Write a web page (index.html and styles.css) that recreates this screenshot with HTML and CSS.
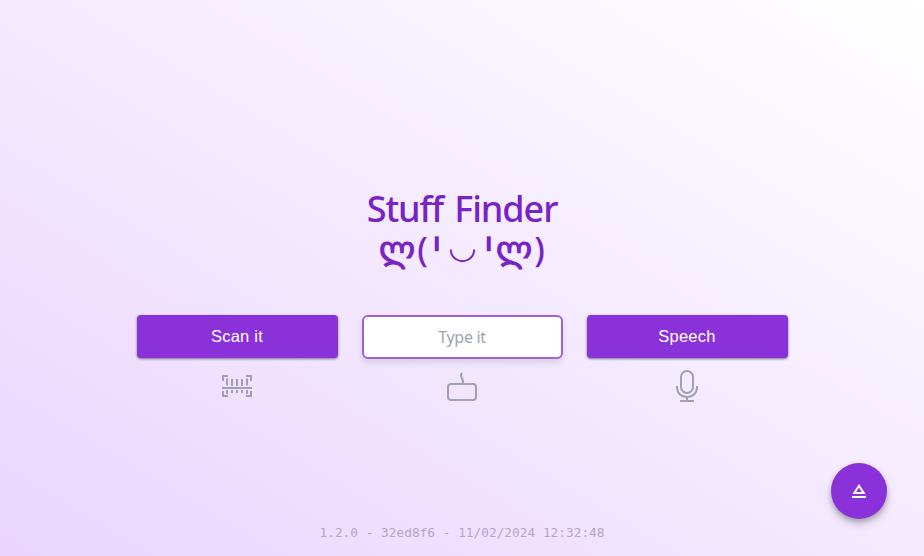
FILE: index.html
```html
<!DOCTYPE html>
<html lang="en">
<head>
<meta charset="utf-8">
<title>Stuff Finder</title>
<link rel="stylesheet" href="styles.css">
</head>
<body>
<main class="page">
  <h1 class="title">
    <span class="name">Stuff Finder</span>
    <span class="face"><span class="hand">ლ</span><span class="paren">(</span><span class="eye">╹</span><span class="mouth">◡</span><span class="eye">╹</span><span class="hand">ლ</span><span class="paren">)</span></span>
  </h1>
  <div class="actions">
    <div class="action">
      <button class="button">Scan it</button>
      <svg class="icon" viewBox="0 0 32 32" fill="none" stroke="currentColor" stroke-width="2">
        <path d="M2 11V6h5M25 6h5v5M2 21v5h5M25 26h5v-5M1 18h30M6 8.5v7M11 9v7M16 9v7M21 9v7M26 8.5v7M6 20v4M11 20v3M16 20v3M21 20v3M26 20v4"/>
      </svg>
    </div>
    <div class="action">
      <input class="field" type="text" placeholder="Type it">
      <svg class="icon" viewBox="0 0 32 32" fill="none" stroke="currentColor" stroke-width="2">
        <rect x="2" y="14" width="28" height="16" rx="3"/>
        <path d="M16 3c-4 4 3 5 .5 11"/>
      </svg>
    </div>
    <div class="action">
      <button class="button">Speech</button>
      <svg class="icon" viewBox="0 0 32 32" fill="none" stroke="currentColor" stroke-width="2">
        <rect x="10" y="1" width="12" height="22" rx="6"/>
        <path d="M6 16v1c0 6 4 10 10 10s10-4 10-10v-1M16 27v4M9 31h14"/>
      </svg>
    </div>
  </div>
  <button class="fab" aria-label="Open">
    <svg class="fab-icon" viewBox="0 0 16 16" fill="none" stroke="currentColor" stroke-width="2">
      <path d="M8 2.8L3.3 10h9.4ZM1 14h14"/>
    </svg>
  </button>
  <footer class="version">1.2.0 - 32ed8f6 - 11/02/2024 12:32:48</footer>
</main>
</body>
</html>
```
FILE: styles.css
```css
* { box-sizing: border-box; }
body { margin: 0; font-family: "Noto Sans", sans-serif; }
.page {
  height: 556px;
  display: flex;
  flex-direction: column;
  align-items: center;
  position: relative;
  padding-top: 189px;
  overflow: hidden;
  background: linear-gradient(to top right, #e9d5ff, #fff);
}
.title {
  margin: 0;
  height: 126px;
  display: flex;
  flex-direction: column;
  align-items: center;
  color: #7823c6;
  font-weight: 500;
  font-size: 36px;
  line-height: 40px;
  white-space: nowrap;
}
.name { letter-spacing: -1.1px; word-spacing: 3px; }
.face {
  display: flex;
  justify-content: center;
  padding-top: 4px;
  padding-left: 1px;
  line-height: 32px;
}
.face span {
  display: flex;
  justify-content: center;
}
.hand {
  width: 37px;
  font-family: "DejaVu Sans", sans-serif;
  font-size: 34px;
  -webkit-text-stroke: 1px currentColor;
}
.paren { width: 14px; font-size: 34px; }
.eye {
  width: 14px;
  font-family: "DejaVu Sans", sans-serif;
  font-size: 25px;
  line-height: 38px;
}
.mouth {
  width: 38px;
  font-family: "DejaVu Sans", sans-serif;
  font-size: 33px;
  line-height: 28px;
}
.actions { display: flex; gap: 24px; }
.action {
  width: 201px;
  display: flex;
  flex-direction: column;
  align-items: center;
}
.button, .field {
  width: 201px;
  height: 43px;
  padding: 0;
  border: 0;
  border-radius: 4px;
  text-align: center;
  font-size: 16px;
}
.button {
  background: #8b31d9;
  color: #fff;
  font-family: "Liberation Sans", sans-serif;
  font-size: 16.5px;
  letter-spacing: .25px;
  box-shadow: 0 1px 3px rgba(0, 0, 0, .35), 0 1px 2px rgba(0, 0, 0, .2);
}
.field {
  height: 44px;
  margin-bottom: -1px;
  border: 2px solid #a35edb;
  border-radius: 6px;
  background: #fff;
  font-family: "Noto Sans", sans-serif;
  letter-spacing: -.3px;
  box-shadow: 0 4px 6px rgba(0, 0, 0, .1);
}
.field::placeholder { color: #9ca3af; opacity: 1; }
.icon { width: 32px; height: 32px; margin-top: 12px; color: #a09fb6; }
.fab {
  position: absolute;
  left: 831px;
  top: 463px;
  width: 56px;
  height: 56px;
  padding: 0;
  border: 0;
  border-radius: 50%;
  display: flex;
  align-items: center;
  justify-content: center;
  background: #8b31d9;
  color: #fff;
  box-shadow: 0 3px 5px rgba(0, 0, 0, .2), 0 5px 10px rgba(0, 0, 0, .16);
}
.fab-icon { width: 16px; height: 16px; }
.version {
  margin-top: auto;
  padding-bottom: 14px;
  font-family: "DejaVu Sans Mono", monospace;
  font-size: 12.8px;
  line-height: 18px;
  color: #b5a5c3;
}
```
